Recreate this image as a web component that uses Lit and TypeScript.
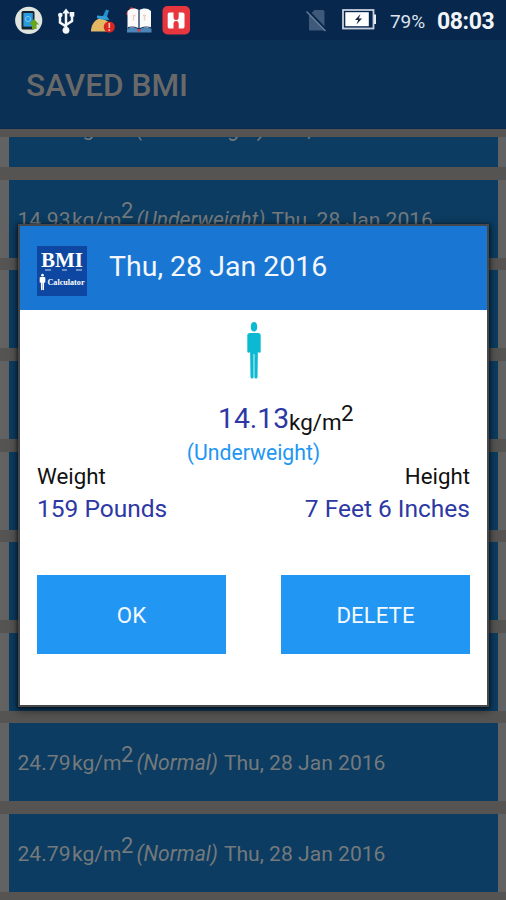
import { LitElement, html, css, svg } from "lit";
import { customElement, property } from "lit/decorators.js";

interface Entry {
  bmi: string;
  label: string;
  date: string;
}

const DATE = "Thu, 28 Jan 2016";
const entries: Entry[] = [
  { bmi: "14.93", label: "Underweight", date: DATE },
  { bmi: "14.93", label: "Underweight", date: DATE },
  { bmi: "", label: "", date: "" },
  { bmi: "", label: "", date: "" },
  { bmi: "", label: "", date: "" },
  { bmi: "", label: "", date: "" },
  { bmi: "", label: "", date: "" },
  { bmi: "24.79", label: "Normal", date: DATE },
  { bmi: "24.79", label: "Normal", date: DATE },
];

@customElement("status-bar")
class StatusBar extends LitElement {
  static styles = css`
    :host {
      display: flex;
      align-items: center;
      height: 40px;
      padding: 0 12px 0 14px;
      box-sizing: border-box;
      background: #07274c;
      color: #f2f4f8;
    }
    .left {
      display: flex;
      align-items: center;
      flex: 1;
    }
    .right {
      display: flex;
      align-items: center;
    }
    svg {
      display: block;
    }
    .percent {
      width: 36px;
      margin-left: 14px;
      font-size: 19px;
      letter-spacing: -0.1px;
      color: #dfe3ec;
      padding-top: 2px;
    }
    .time {
      width: 57px;
      margin-left: 11px;
      font-size: 23px;
      font-weight: 700;
      letter-spacing: -0.4px;
      padding-top: 3px;
    }
  `;
  render() {
    return html`
      <div class="left">
        <svg width="180" height="40" viewBox="14 0 180 40">
          <circle cx="28.7" cy="20.3" r="13.6" fill="#dfe4df" />
          <rect x="21.5" y="11" width="13" height="18.5" rx="1.5" fill="#17232f" />
          <rect x="23.4" y="13" width="9.4" height="13.6" fill="#2b9be0" />
          <circle cx="28" cy="19" r="2.6" fill="none" stroke="#7cc6f2" stroke-width="1" />
          <path d="M34 19l5 5.500h-2.500v4.500h-4.500v-4.500H29z" fill="#6aa51e" />
          <g fill="none" stroke="#f4f6fa" stroke-width="2.5">
            <path d="M66 30V12M66 26.500l-6-4v-6M66 25l6-4v-6" />
          </g>
          <path d="M66 8.500l3.800 5h-7.600z" fill="#f4f6fa" />
          <circle cx="66" cy="30.300" r="3.400" fill="#f4f6fa" />
          <circle cx="60.300" cy="15" r="2.300" fill="#f4f6fa" />
          <rect x="69.700" y="12" width="4.600" height="4.600" fill="#f4f6fa" />
          <path d="M91 31.500c0-6 3-11 8-13 6 0 11 4 13 8l-2 5z" fill="#e3b862" />
          <path d="M102.500 17l3.500-7.500 3 1-2.500 7.500z" fill="#2590cf" />
          <path d="M97 15.500l10 1 2.500 3.500-8-.5-4.500-1.500z" fill="#2fa0dc" />
          <circle cx="109.300" cy="27" r="5.600" fill="#da2521" />
          <path d="M109.300 23v5M109.300 29.300v1.600" stroke="#ffc4ba" stroke-width="1.600" />
          <path d="M126 14l5-7 8 4-7 8z" fill="#e23a3c" />
          <path d="M127.500 28V11c4-3.500 8-3 11.500-1 4-2 8.500-2.500 12 1v17z" fill="#fafafa" />
          <path d="M139 10v18" stroke="#17335a" stroke-width="1.300" />
          <path d="M132.500 15.500h3M133.500 15.500v5M143 15.500h3M144.500 15.500v5" stroke="#ecd0c2" stroke-width="1.300" />
          <path d="M127 28.500c5-1 9-1 12 .5 3-1.500 7-1.500 12.500-.5v4h-24.500z" fill="#4d86b8" />
          <path d="M128 27.500c5-1 8-.5 11 1.500 3-2 7-2.500 12-1.500" stroke="#17335a" stroke-width="1" fill="none" />
          <rect x="137.500" y="29" width="3" height="2.500" fill="#d83b45" />
          <rect x="162.500" y="6" width="27.500" height="28.500" rx="5" fill="#e8363f" />
          <path d="M169.500 12.500h4v4.500c0 2 .8 3 2.600 3s2.600-1 2.600-3v-4.500h4c1 0 1.800.8 1.800 1.800v12.400c0 1-.8 1.800-1.800 1.800h-4v-4.500c0-2-.8-3-2.600-3s-2.600 1-2.600 3v4.500h-4c-1 0-1.800-.8-1.800-1.800V14.300c0-1 .8-1.800 1.800-1.800z" fill="#fff" />
        </svg>
      </div>
      <div class="right">
        <svg width="72" height="40" viewBox="304 0 72 40">
          <path d="M309 15.500V30.500h15.500V11.800q0-1.800-1.800-1.800H314.500z" fill="#3f597b" />
          <path d="M307.500 10l19 20" stroke="#07274c" stroke-width="2" />
          <path d="M306.500 11.500l19 19.500" stroke="#667b97" stroke-width="1.500" />
          <rect x="343" y="10" width="30.500" height="18.500" fill="none" stroke="#c9d0e0" stroke-width="1.800" />
          <rect x="345.300" y="12.200" width="23.500" height="14" fill="#fff" />
          <rect x="374" y="14.500" width="2" height="9.500" fill="#e8ebf2" />
          <path d="M360.500 14l-5.500 6h3.200l-1.700 4.500 5.500-6h-3.200z" fill="#182545" />
        </svg>
        <span class="percent">79%</span>
        <span class="time">08:03</span>
      </div>
    `;
  }
}

@customElement("bmi-row")
class BmiRow extends LitElement {
  @property({ attribute: false }) entry!: Entry;
  static styles = css`
    :host {
      display: flex;
      flex: none;
      align-items: center;
      box-sizing: border-box;
      height: 78px;
      margin: 0 8.500px 0 9px;
      padding: 2px 0 0 8.500px;
      background: #0c3c61;
      color: #74797c;
      font-size: 21.100px;
      line-height: 26px;
      white-space: pre;
    }
    .value {
      width: 54.500px;
    }
    .unit {
      width: 49px;
    }
    .sup {
      width: 15.500px;
      font-size: 22px;
      margin-top: -17px;
    }
    .label {
      font-style: italic;
      margin-right: 6px;
    }
  `;
  render() {
    const e = this.entry;
    if (!e.bmi) return null;
    return html`<span class="value">${e.bmi}</span><span class="unit">kg/m</span
      ><span class="sup">2</span><span class="label">(${e.label})</span
      ><span class="date">${e.date}</span>`;
  }
}

const person = (color: string) => svg`
  <ellipse cx="10" cy="5.800" rx="3.200" ry="4.800" fill=${color} />
  <path d="M6 12h8q2.700 0 2.700 2.500V30.500q0 1.300-1.300 1.300t-1.500-1.300L13.500 56q0 1.500-1.600 1.500T10.400 56V33h-.8V56q0 1.500-1.500 1.500T6.500 56L6.100 30.500Q6 31.800 4.700 31.800t-1.400-1.300V14.500Q3.300 12 6 12z" fill=${color} />`;

@customElement("bmi-dialog")
class BmiDialog extends LitElement {
  static styles = css`
    :host {
      display: flex;
      flex-direction: column;
      box-sizing: border-box;
      background: #fff;
      box-shadow: 0 0 0 2px #45484a, 0 1px 3px 3px rgba(0, 0, 0, 0.5),
        0 3px 9px 3px rgba(0, 0, 0, 0.4);
    }
    .head {
      display: flex;
      align-items: center;
      height: 84px;
      padding-left: 17px;
      background: #1976d2;
      color: #f3f7fc;
    }
    .logo {
      display: block;
      margin-top: 5px;
    }
    .title {
      margin: -2px 0 0 22px;
      font-size: 28.500px;
      line-height: 36px;
      white-space: nowrap;
    }
    .body {
      display: flex;
      flex-direction: column;
      padding: 11px 17px 0 17px;
    }
    .person {
      display: block;
      align-self: center;
    }
    .reading {
      display: flex;
      height: 44px;
      margin-top: 16px;
      padding-left: 181px;
      color: #111;
      font-size: 22.400px;
      line-height: 30px;
    }
    .number {
      width: 71px;
      padding-top: 8px;
      font-size: 28.300px;
      color: #2d38a4;
    }
    .unit {
      width: 52px;
      padding-top: 11px;
    }
    .sup {
      padding-top: 2px;
    }
    .status {
      text-align: center;
      height: 26px;
      line-height: 26px;
      font-size: 21.200px;
      color: #2196f3;
    }
    .pair {
      display: flex;
      justify-content: space-between;
    }
    .names {
      height: 27px;
      line-height: 20px;
      font-size: 22.300px;
      color: #111;
    }
    .values {
      height: 32px;
      line-height: 32px;
      font-size: 24.500px;
      color: #2d38a4;
    }
    .buttons {
      margin-top: 50px;
    }
    .button {
      width: 189px;
      height: 79px;
      padding-top: 1px;
      box-sizing: border-box;
      display: flex;
      align-items: center;
      justify-content: center;
      background: #2196f3;
      color: #f4f9fe;
      font-size: 22.300px;
    }
    .bmi {
      font: 700 21px "Liberation Serif", serif;
    }
    .calc {
      font: 700 9px "Liberation Serif", serif;
    }
  `;
  render() {
    return html`
      <div class="head">
        <svg class="logo" width="50" height="50" viewBox="0 0 50 50">
          <rect width="50" height="50" fill="#0d47a1" />
          <text class="bmi" x="4" y="20.500" textLength="42" fill="#fff">BMI</text>
          <path d="M8 24h6M25 24h5M39 24h6" stroke="#cfdcf3" stroke-width="1" />
          <g transform="translate(1.300 27.500) scale(.42 .29)">${person("#fff")}</g>
          <text class="calc" x="10.500" y="38.500" textLength="37" lengthAdjust="spacingAndGlyphs" fill="#fff">Calculator</text>
        </svg>
        <span class="title">Thu, 28 Jan 2016</span>
      </div>
      <div class="body">
        <svg class="person" width="20" height="59" viewBox="0 0 20 59">${person("#0cb9d2")}</svg>
        <div class="reading">
          <span class="number">14.13</span><span class="unit">kg/m</span><span class="sup">2</span>
        </div>
        <div class="status">(Underweight)</div>
        <div class="pair names"><span>Weight</span><span>Height</span></div>
        <div class="pair values"><span>159 Pounds</span><span>7 Feet 6 Inches</span></div>
        <div class="pair buttons">
          <div class="button">OK</div>
          <div class="button">DELETE</div>
        </div>
      </div>
    `;
  }
}

@customElement("app-root")
class AppRoot extends LitElement {
  static styles = css`
    :host {
      display: flex;
      flex-direction: column;
      position: relative;
      width: 506px;
      height: 900px;
      overflow: hidden;
      background: #555453;
      font-family: Roboto, "Liberation Sans", sans-serif;
    }
    .toolbar {
      display: flex;
      align-items: center;
      flex: none;
      height: 89px;
      padding: 2px 0 0 26px;
      box-sizing: border-box;
      background: #0a3055;
      color: #69696a;
      font-size: 31.600px;
      font-weight: 500;
      border-bottom: 1px solid #0a2a4b;
    }
    .list {
      display: flex;
      flex-direction: column;
      justify-content: flex-end;
      gap: 12.600px;
      flex: 1;
      min-height: 0;
      margin-top: 8px;
      padding-bottom: 8px;
      overflow: hidden;
    }
    .item {
      display: flex;
      flex: none;
      flex-direction: column;
      background: #636262;
    }
    .dialog {
      position: absolute;
      left: 20px;
      top: 226px;
      width: 467px;
      height: 479px;
    }
  `;
  render() {
    return html`
      <status-bar></status-bar>
      <div class="toolbar">SAVED BMI</div>
      <div class="list">
        ${entries.map((e) => html`<div class="item"><bmi-row .entry=${e}></bmi-row></div>`)}
      </div>
      <bmi-dialog class="dialog"></bmi-dialog>
    `;
  }
}
